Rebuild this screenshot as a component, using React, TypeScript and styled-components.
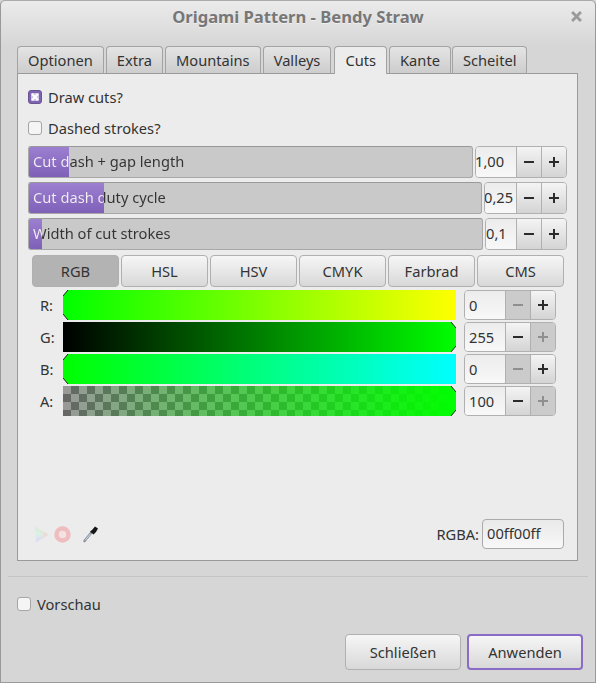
import React from "react";
import styled, { createGlobalStyle } from "styled-components";

const Global = createGlobalStyle`
  html, body { margin: 0; padding: 0; background: #d6d6d6; }
  body { font-family: "Noto Sans", "Open Sans", sans-serif; font-size: 14.67px; color: #333; }
  * { box-sizing: border-box; }
`;

const Win = styled.div`
  width: 596px;
  height: 683px;
  display: flex;
  flex-direction: column;
  background: #d6d6d6;
  border: 1px solid #999;
  border-top-color: #aaa;
  border-radius: 5px 5px 0 0;
`;

const TitleBar = styled.div`
  position: relative;
  height: 45px;
  flex: none;
  display: flex;
  align-items: center;
  justify-content: center;
  padding: 0 0 14px 0;
  background: linear-gradient(#ebebeb, #d6d6d6);
  border-radius: 5px 5px 0 0;
  font-weight: 700;
  font-size: 16.6px;
  color: #777;
  text-shadow: 0 1px 0 rgba(255, 255, 255, 0.5);
`;

const CloseIcon = styled.svg`
  position: absolute;
  right: 13px;
  top: 10px;
`;

const Body = styled.div`
  flex: 1;
  display: flex;
  flex-direction: column;
  padding: 0 17px 0 16px;
`;

const Tabs = styled.div`
  display: flex;
  gap: 2px;
  height: 28px;
  position: relative;
  z-index: 1;
  margin-bottom: -1px;
`;

const Tab = styled.div<{ $active?: boolean }>`
  height: 28px;
  padding: 0 10px ${(p) => (p.$active ? "1px" : "0")};
  margin-left: ${(p) => (p.$active ? "1px" : "0")};
  display: flex;
  align-items: center;
  border: 1px solid #a3a3a3;
  border-bottom: ${(p) => (p.$active ? "none" : "1px solid #9a9a9a")};
  border-radius: 4px 4px 0 0;
  background: ${(p) => (p.$active ? "#ececec" : "linear-gradient(#e4e4e4, #cdcdcd)")};
  color: #333;
  &:last-child {
    margin-left: -1px;
  }
`;

const Panel = styled.div`
  height: 488px;
  background: #ececec;
  border: 1px solid #9a9a9a;
  padding: 0 10px;
  display: flex;
  flex-direction: column;
`;

const CheckRow = styled.label<{ $height: number }>`
  display: flex;
  align-items: center;
  gap: 6px;
  height: ${(p) => p.$height}px;
  flex: none;
`;

const CheckBox = styled.span<{ $checked?: boolean }>`
  width: 14px;
  height: 14px;
  display: flex;
  align-items: center;
  justify-content: center;
  border-radius: 3px;
  border: 1px solid ${(p) => (p.$checked ? "#6b5591" : "#a5a5a5")};
  background: ${(p) => (p.$checked ? "#8064b4" : "#f5f5f5")};
`;

const SpinRows = styled.div`
  display: flex;
  flex-direction: column;
  gap: 4px;
  margin-top: 10px;
`;

const SpinRow = styled.div`
  display: flex;
  height: 32px;
  gap: 2px;
`;

const ScaleBar = styled.div`
  position: relative;
  flex: 1;
  border: 1px solid #a8a8a8;
  border-top-color: #999;
  border-radius: 3px;
  background: #c9c9c9;
  overflow: hidden;
  display: flex;
  align-items: center;
`;

const ScaleFill = styled.div`
  position: absolute;
  left: 0;
  top: 0;
  bottom: 0;
  background: linear-gradient(#9c7fd0, #7f60b8);
`;

const ScaleLabel = styled.span`
  position: relative;
  padding: 0 0 2px 4px;
  flex: 1;
  -webkit-background-clip: text;
  background-clip: text;
  color: transparent;
`;

const Spin = styled.div`
  display: flex;
  flex: none;
  border: 1px solid #b0b0b0;
  border-radius: 4px;
  overflow: hidden;
  height: 100%;
`;

const SpinEntry = styled.div<{ $width: number; $indent: number; $raised?: boolean }>`
  width: ${(p) => p.$width}px;
  text-indent: ${(p) => p.$indent}px;
  padding-bottom: ${(p) => (p.$raised ? "2px" : "0")};
  display: flex;
  align-items: center;
  background: linear-gradient(#ececec, #f8f8f8);
  color: #333;
`;

const SpinBtn = styled.div<{ $disabled?: boolean }>`
  width: 25px;
  display: flex;
  align-items: center;
  justify-content: center;
  border-left: 1px solid #b0b0b0;
  background: ${(p) => (p.$disabled ? "#cbcbcb" : "linear-gradient(#f4f4f4, #d4d4d4)")};
`;

const ModeRow = styled.div`
  display: flex;
  gap: 2px;
  margin: 5px 0 3px 4px;
  height: 32px;
  flex: none;
`;

const ModeBtn = styled.div<{ $active?: boolean }>`
  width: 87px;
  display: flex;
  align-items: center;
  justify-content: center;
  border: 1px solid #b0b0b0;
  border-radius: 4px;
  background: ${(p) => (p.$active ? "#b3b3b3" : "linear-gradient(#f6f6f6, #d8d8d8)")};
  color: #333;
`;

const ColorGrid = styled.div`
  display: flex;
  flex-direction: column;
  gap: 2px;
`;

const ColorRow = styled.div`
  display: flex;
  align-items: stretch;
  height: 30px;
`;

const ColorLabel = styled.div`
  width: 35px;
  padding-left: 12px;
  display: flex;
  align-items: center;
  color: #333;
`;

const ColorTrack = styled.div<{ $bg: string }>`
  position: relative;
  width: 393px;
  margin-right: 8px;
  background: ${(p) => p.$bg};
`;

const Marker = styled.svg<{ $side: "left" | "right"; $vert: "top" | "bottom" }>`
  position: absolute;
  ${(p) => p.$side}: 0;
  ${(p) => p.$vert}: 0;
`;

const Spacer = styled.div`
  flex: 1;
`;

const BottomRow = styled.div`
  display: flex;
  align-items: center;
  height: 30px;
  margin-bottom: 11px;
  margin-right: 3px;
  padding-left: 5px;
`;

const IconGroup = styled.div`
  display: flex;
  align-items: center;
  gap: 4px;
`;

const Dropper = styled.svg`
  margin-left: 7px;
`;

const RgbaLabel = styled.span`
  margin-left: auto;
  margin-right: 3px;
  color: #333;
`;

const RgbaEntry = styled.div`
  width: 82px;
  height: 30px;
  padding: 0 4px 2px 4px;
  display: flex;
  align-items: center;
  border: 1px solid #aaa;
  border-radius: 4px;
  background: linear-gradient(#e9e9e9, #f8f8f8);
  color: #333;
`;

const Separator = styled.div`
  height: 1px;
  flex: none;
  margin: 15px -10px 0 -9px;
  background: #c4c4c4;
`;

const PreviewRow = styled.div`
  height: 57px;
  flex: none;
  display: flex;
  align-items: center;
  padding-bottom: 4px;
  gap: 6px;
`;

const Footer = styled.div`
  display: flex;
  justify-content: flex-end;
  gap: 6px;
  margin-right: -5px;
`;

const ActionBtn = styled.div<{ $focused?: boolean }>`
  width: 116px;
  height: 36px;
  display: flex;
  align-items: center;
  justify-content: center;
  border: ${(p) => (p.$focused ? "2px solid #8a6cc6" : "1px solid #b0b0b0")};
  border-radius: 4px;
  background: linear-gradient(#f6f6f6, #d8d8d8);
  color: #333;
`;

const MinusPlus = ({ plus, dim }: { plus?: boolean; dim?: boolean }) => (
  <svg width="12" height="12" viewBox="0 0 12 12">
    <rect x="1" y="5" width="10" height="2" fill={dim ? "#8f8f8f" : "#2b2b2b"} />
    {plus && <rect x="5" y="1" width="2" height="10" fill={dim ? "#8f8f8f" : "#2b2b2b"} />}
  </svg>
);

const Corner = ({ side, vert }: { side: "left" | "right"; vert: "top" | "bottom" }) => {
  const pts =
    side === "left"
      ? vert === "top" ? "0,0 5,0 0,6" : "0,6 5,6 0,0"
      : vert === "top" ? "6,0 1,0 6,6" : "6,6 1,6 6,0";
  const line =
    side === "left"
      ? vert === "top" ? "5,0 0,6" : "5,6 0,0"
      : vert === "top" ? "1,0 6,6" : "1,6 6,0";
  return (
    <Marker $side={side} $vert={vert} width="6" height="6" viewBox="0 0 6 6">
      <polygon points={pts} fill="#ececec" />
      <polyline points={line} fill="none" stroke="#222" strokeWidth="1" />
    </Marker>
  );
};

const scales = [
  { label: "Cut dash + gap length", fill: 40, value: "1,00", width: 40, indent: -1 },
  { label: "Cut dash duty cycle", fill: 75, value: "0,25", width: 31, indent: -1 },
  { label: "Width of cut strokes", fill: 13, value: "0,1", width: 30, indent: 0 },
];

const modes = ["RGB", "HSL", "HSV", "CMYK", "Farbrad", "CMS"];

const checker = "repeating-conic-gradient(#666 0 25%, #999 0 50%) 0 0 / 16px 16px";

const channels = [
  { label: "R:", bg: "linear-gradient(90deg, #00ff00, #ffff00)", value: "0", side: "left" as const, minusOff: true, plusOff: false },
  { label: "G:", bg: "linear-gradient(90deg, #000000, #00ff00)", value: "255", side: "right" as const, minusOff: false, plusOff: true },
  { label: "B:", bg: "linear-gradient(90deg, #00ff00, #00ffff)", value: "0", side: "left" as const, minusOff: true, plusOff: false },
  { label: "A:", bg: `linear-gradient(90deg, rgba(0,255,0,0), #00ff00), ${checker}`, value: "100", side: "right" as const, minusOff: false, plusOff: true },
];

export default function App() {
  return (
    <>
      <Global />
      <Win>
        <TitleBar>
          Origami Pattern - Bendy Straw
          <CloseIcon width="11" height="11" viewBox="0 0 10 10">
            <path d="M1 1 L9 9 M9 1 L1 9" stroke="#9a9a9a" strokeWidth="2.6" />
          </CloseIcon>
        </TitleBar>
        <Body>
          <Tabs>
            <Tab>Optionen</Tab>
            <Tab>Extra</Tab>
            <Tab>Mountains</Tab>
            <Tab>Valleys</Tab>
            <Tab $active>Cuts</Tab>
            <Tab>Kante</Tab>
            <Tab>Scheitel</Tab>
          </Tabs>
          <Panel>
            <CheckRow $height={46}>
              <CheckBox $checked>
                <svg width="10" height="10" viewBox="0 0 10 10">
                  <rect x="1" y="1" width="8" height="8" rx="1" fill="#cfc4e2" />
                  <path d="M2 2 L8 8 M8 2 L2 8" stroke="#ffffff" strokeWidth="2" />
                </svg>
              </CheckBox>
              Draw cuts?
            </CheckRow>
            <CheckRow $height={16}>
              <CheckBox />
              Dashed strokes?
            </CheckRow>
            <SpinRows>
              {scales.map((s) => (
                <SpinRow key={s.label}>
                  <ScaleBar>
                    <ScaleFill style={{ width: s.fill }} />
                    <ScaleLabel
                      style={{
                        backgroundImage: `linear-gradient(90deg, #f0f0f0 ${s.fill}px, #333 ${s.fill}px)`,
                      }}
                    >
                      {s.label}
                    </ScaleLabel>
                  </ScaleBar>
                  <Spin>
                    <SpinEntry $width={s.width} $indent={s.indent} $raised>{s.value}</SpinEntry>
                    <SpinBtn><MinusPlus /></SpinBtn>
                    <SpinBtn><MinusPlus plus /></SpinBtn>
                  </Spin>
                </SpinRow>
              ))}
            </SpinRows>
            <ModeRow>
              {modes.map((m, i) => (
                <ModeBtn key={m} $active={i === 0}>{m}</ModeBtn>
              ))}
            </ModeRow>
            <ColorGrid>
              {channels.map((c) => (
                <ColorRow key={c.label}>
                  <ColorLabel>{c.label}</ColorLabel>
                  <ColorTrack $bg={c.bg}>
                    <Corner side={c.side} vert="top" />
                    <Corner side={c.side} vert="bottom" />
                  </ColorTrack>
                  <Spin>
                    <SpinEntry $width={40} $indent={4}>{c.value}</SpinEntry>
                    <SpinBtn $disabled={c.minusOff}><MinusPlus dim={c.minusOff} /></SpinBtn>
                    <SpinBtn $disabled={c.plusOff}><MinusPlus plus dim={c.plusOff} /></SpinBtn>
                  </Spin>
                </ColorRow>
              ))}
            </ColorGrid>
            <Spacer />
            <BottomRow>
              <IconGroup>
                <svg width="17" height="17" viewBox="0 0 17 17">
                  <defs>
                    <linearGradient id="gamutV" x1="0" y1="0" x2="0" y2="1">
                      <stop offset="0" stopColor="#dcebd0" />
                      <stop offset="0.5" stopColor="#d8f2e8" />
                      <stop offset="1" stopColor="#e2d2f6" />
                    </linearGradient>
                    <linearGradient id="gamutH" x1="0" y1="0" x2="1" y2="0">
                      <stop offset="0.35" stopColor="#f5d0d0" stopOpacity="0" />
                      <stop offset="1" stopColor="#f5d0d0" />
                    </linearGradient>
                  </defs>
                  <polygon points="2,0.5 15.5,8.5 3,16.5" fill="url(#gamutV)" />
                  <polygon points="2,0.5 15.5,8.5 3,16.5" fill="url(#gamutH)" />
                </svg>
                <svg width="17" height="17" viewBox="0 0 17 17">
                  <circle cx="8.5" cy="8.5" r="6" fill="#f3e2e2" stroke="#efbcc0" strokeWidth="4.5" />
                </svg>
                <Dropper width="17" height="18" viewBox="0 0 17 18">
                  <path d="M2.5 16 L9 8" stroke="#7d8a96" strokeWidth="2.4" strokeLinecap="round" />
                  <path d="M3 15.5 L8.5 8.7" stroke="#e8edf0" strokeWidth="0.9" />
                  <path d="M8 6.5 L10 5 L13 1.5 L16 3.5 L14 7 L11.5 9.5 Z" fill="#161616" />
                </Dropper>
              </IconGroup>
              <RgbaLabel>RGBA:</RgbaLabel>
              <RgbaEntry>00ff00ff</RgbaEntry>
            </BottomRow>
          </Panel>
          <Separator />
          <PreviewRow>
            <CheckBox />
            Vorschau
          </PreviewRow>
          <Footer>
            <ActionBtn>Schließen</ActionBtn>
            <ActionBtn $focused>Anwenden</ActionBtn>
          </Footer>
        </Body>
      </Win>
    </>
  );
}
